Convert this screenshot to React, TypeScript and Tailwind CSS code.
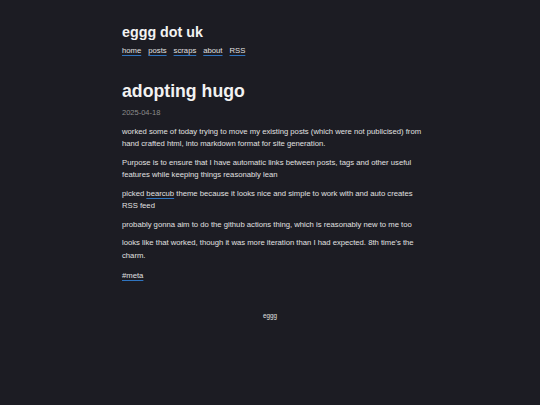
import React from "react";

const linkCls =
  "text-[#e0e0e0] underline decoration-[#2f74c0] decoration-1 underline-offset-[2px]";

export default function App() {
  return (
    <div
      className="min-h-[405px] w-full bg-[#1c1c23] text-[#e0e0e0]"
      style={{ fontFamily: '"Liberation Sans", Arial, sans-serif' }}
    >
      <div className="pl-[122px]">
        <div className="w-[300px]">
          <header className="pt-[23.5px]">
            <div className="text-[14.3px] leading-[17px] font-bold text-[#f2f2f2]">
              eggg dot uk
            </div>
            <nav className="mt-[4px] flex gap-[7px] text-[7.7px] leading-[12px]">
              <a className={linkCls}>home</a>
              <a className={linkCls}>posts</a>
              <a className={linkCls}>scraps</a>
              <a className={linkCls}>about</a>
              <a className={linkCls}>RSS</a>
            </nav>
          </header>
          <main>
            <h1 className="mt-[24px] text-[17.7px] leading-[21px] font-bold text-[#f2f2f2]">
              adopting hugo
            </h1>
            <div className="mt-[5.5px] text-[7.5px] leading-[12px] text-[#8c8c8c]">
              2025-04-18
            </div>
            <div className="mt-[7px] text-[7.7px] leading-[12.3px] flex flex-col gap-[6.3px]">
              <p>
                worked some of today trying to move my existing posts (which
                were not publicised) from hand crafted html, into markdown
                format for site generation.
              </p>
              <p>
                Purpose is to ensure that I have automatic links between posts,
                tags and other useful features while keeping things reasonably
                lean
              </p>
              <p>
                picked <a className={linkCls}>bearcub</a> theme because it looks
                nice and simple to work with and auto creates RSS feed
              </p>
              <p>
                probably gonna aim to do the github actions thing, which is
                reasonably new to me too
              </p>
              <p>
                looks like that worked, though it was more iteration than I had
                expected. 8th time's the charm.
              </p>
              <p className="mt-[1.5px]">
                <a className={linkCls}>#meta</a>
              </p>
            </div>
          </main>
        </div>
      </div>
      <footer className="mt-[29px] text-center text-[6.3px] leading-[10px] text-[#e0e0e0]">
        eggg
      </footer>
    </div>
  );
}
